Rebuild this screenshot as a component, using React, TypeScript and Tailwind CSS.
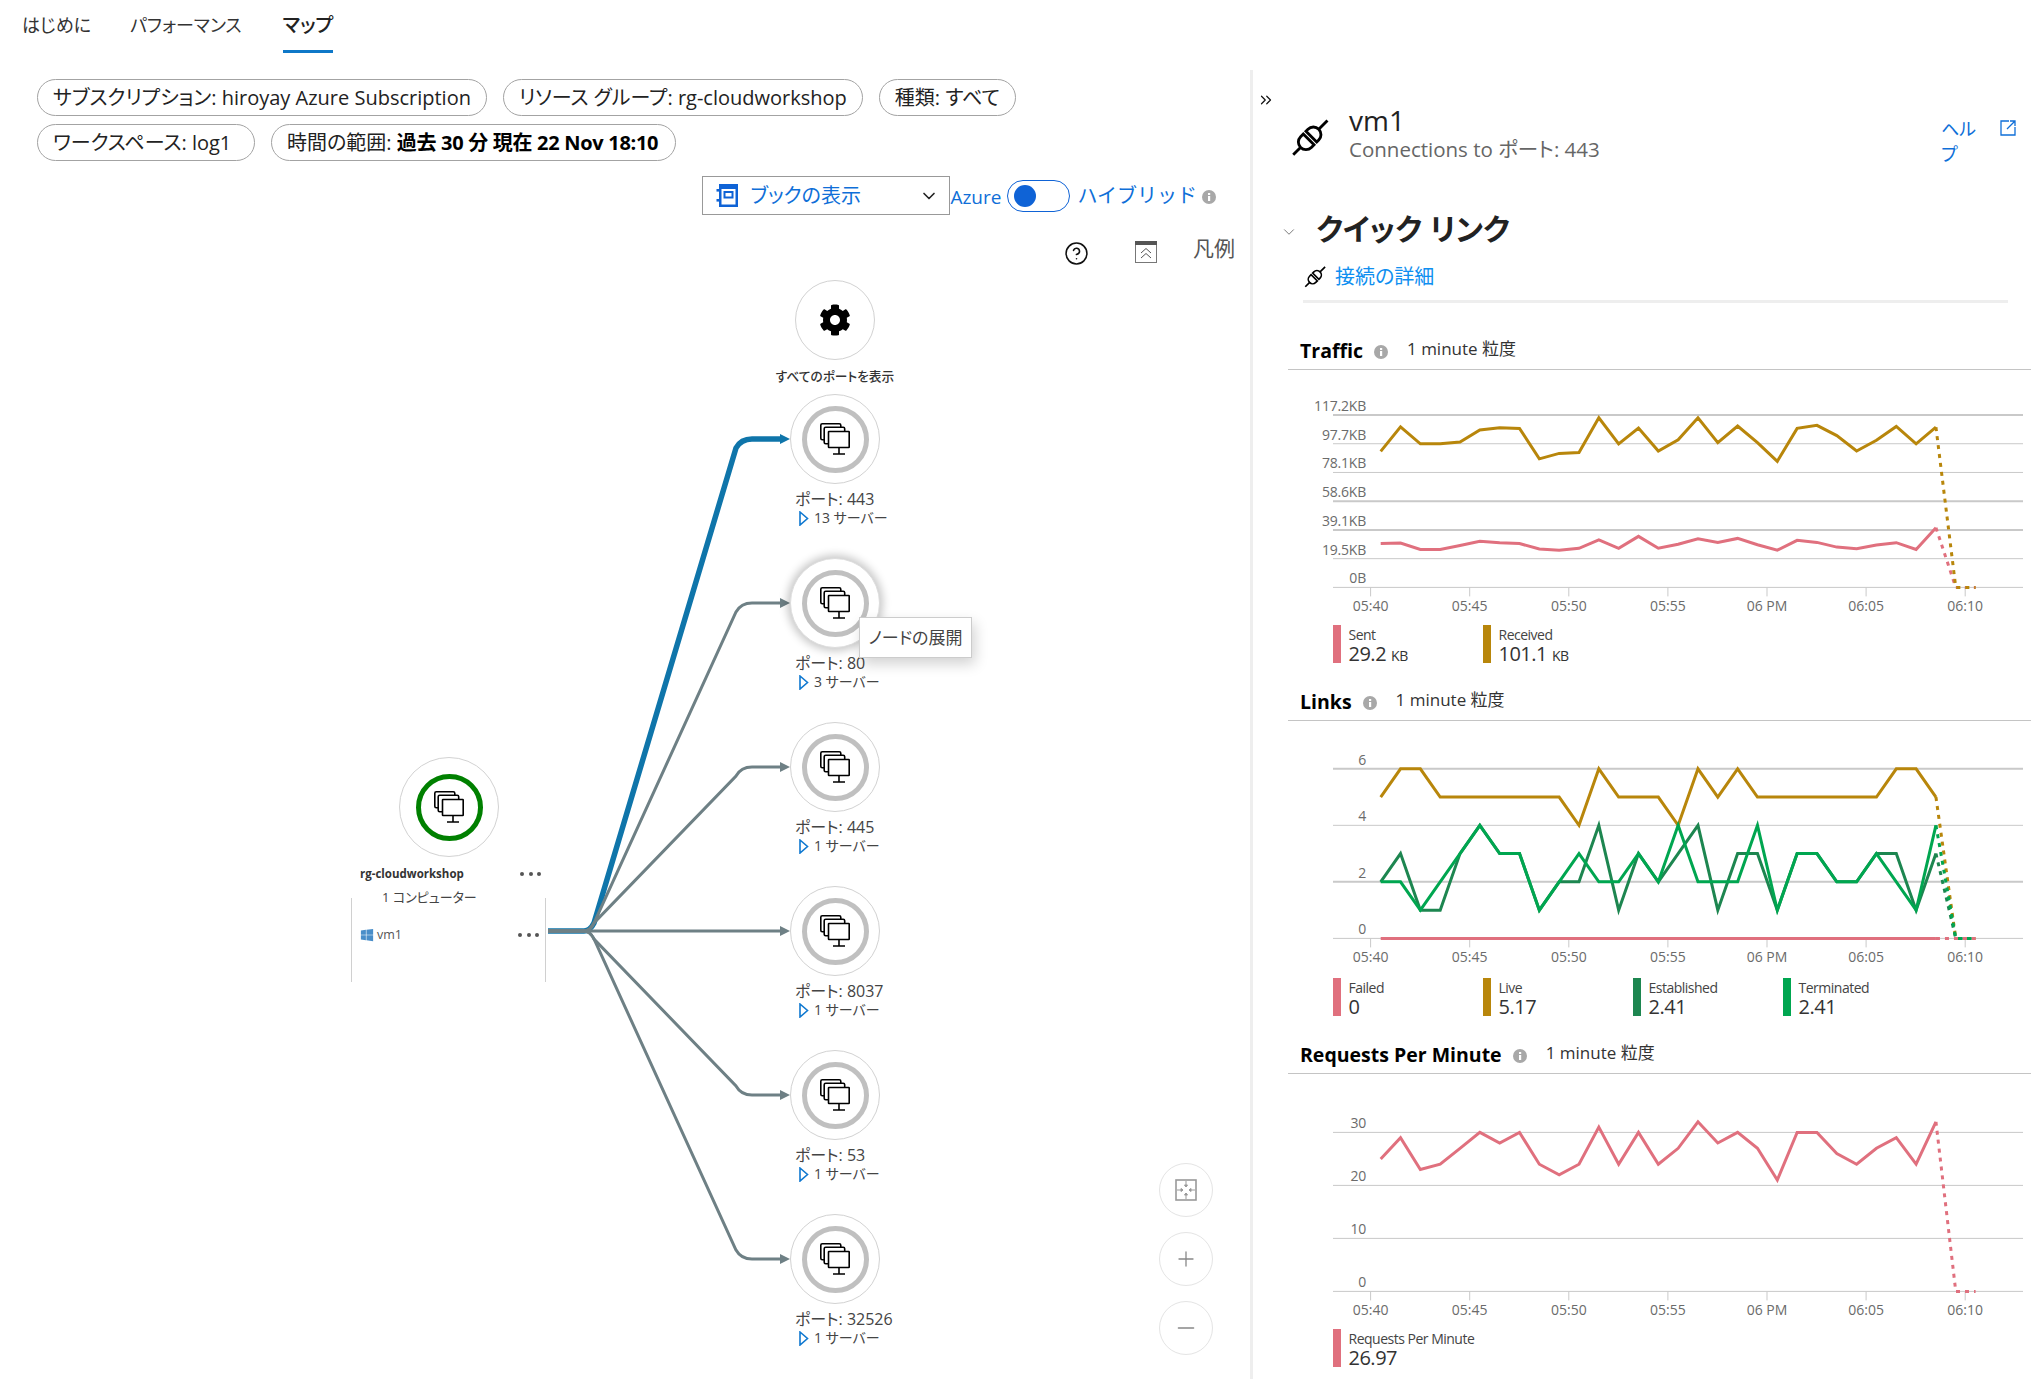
import React from 'react';
import { ChevronDown, ChevronsRight, CircleHelp, Minus, Plus } from 'lucide-react';
import { FaCog, FaWindows } from 'react-icons/fa';

const CANVAS_TOP = 264;
const HUB_Y = 931;

const ports = [
  { port: '443', servers: '13 サーバー', y: 439, color: '#0f75aa', width: 5.5 },
  { port: '80', servers: '3 サーバー', y: 603, color: '#6e8085', width: 3 },
  { port: '445', servers: '1 サーバー', y: 767, color: '#6e8085', width: 3 },
  { port: '8037', servers: '1 サーバー', y: 931, color: '#6e8085', width: 3 },
  { port: '53', servers: '1 サーバー', y: 1095, color: '#6e8085', width: 3 },
  { port: '32526', servers: '1 サーバー', y: 1259, color: '#6e8085', width: 3 },
];

const PINK = '#e0707e';
const GOLD = '#b8860b';
const DARK_GREEN = '#1d8650';
const GREEN = '#00a650';

const tickLabels = ['05:40', '05:45', '05:50', '05:55', '06 PM', '06:05', '06:10'];

const received = [92.5, 109.1, 97.6, 97.6, 98.9, 107, 108.6, 108.1, 87.4, 91.1, 91.7, 115.3, 97.6, 108.3, 92.7, 100.3, 115.3, 98.4, 109.7, 98.4, 85.7, 108.1, 110.2, 103.2, 92.7, 100, 109.4, 97.6, 108.9];
const sent = [29.8, 30.1, 25.8, 25.8, 28.5, 31.4, 30.4, 29.8, 26.1, 25.3, 26.6, 32.3, 26.6, 34.7, 26.6, 29.3, 33.1, 30.6, 33.3, 29, 25.3, 32, 30.6, 27.4, 26.3, 28.8, 30.4, 25.8, 40.6];
const live = [5, 6, 6, 5, 5, 5, 5, 5, 5, 5, 4, 6, 5, 5, 5, 4, 6, 5, 6, 5, 5, 5, 5, 5, 5, 5, 6, 6, 5];
const established = [2, 3, 1, 1, 3, 4, 3, 3, 1, 2, 2, 4, 1, 3, 2, 3, 4, 1, 3, 3, 1, 3, 3, 2, 2, 3, 3, 1, 3];
const terminated = [2, 2, 1, 2, 3, 4, 3, 3, 1, 2, 3, 2, 2, 3, 2, 4, 2, 2, 2, 4, 1, 3, 3, 2, 2, 3, 2, 1, 4];
const failed = new Array(29).fill(0);
const requests = [25, 29, 23, 24, 27, 30, 28, 30, 24, 22, 24, 31, 24, 30, 24, 27, 32, 28, 30, 27, 21, 30, 30, 26, 24, 27, 29, 24, 32];

// svg left edge sits at page x 1288
const PLOT_LEFT = 45;
const PLOT_RIGHT = 735;
const PLOT_BOTTOM = 217.4;
const FIRST_X = 92.7;
const STEP_X = 19.83;
const FIRST_TICK = 82.6;
const TICK_STEP = 99.1;

interface Series {
  color: string;
  values: number[];
}

interface ChartProps {
  top: number;
  max: number;
  labels: string[];
  thick?: number[];
  series: Series[];
  height: number;
}

const Chart: React.FC<ChartProps> = ({ top, max, labels, thick = [], series, height }) => {
  const yOf = (v: number) => PLOT_BOTTOM - (v / max) * (PLOT_BOTTOM - top);
  const gap = (PLOT_BOTTOM - top) / (labels.length - 1);
  return (
    <svg width={743} height={height} className="block">
      {labels.map((label, i) => {
        const y = top + i * gap;
        return (
          <g key={label}>
            <line x1={PLOT_LEFT} x2={PLOT_RIGHT} y1={y} y2={y} stroke="#c9c9c9" strokeWidth={thick.includes(i) ? 2 : 1} />
            <text x={78} y={y - 4} textAnchor="end" fontSize={14} letterSpacing={-0.2} fill="#6b6b6b">{label}</text>
          </g>
        );
      })}
      {tickLabels.map((label, i) => {
        const x = FIRST_TICK + i * TICK_STEP;
        return (
          <g key={label}>
            <line x1={x} x2={x} y1={PLOT_BOTTOM} y2={PLOT_BOTTOM + 9} stroke="#c9c9c9" />
            <text x={x} y={PLOT_BOTTOM + 24} textAnchor="middle" fontSize={14} fill="#6b6b6b">{label}</text>
          </g>
        );
      })}
      {series.map((s, idx) => {
        const points = s.values.map((v, i) => `${FIRST_X + i * STEP_X},${yOf(v)}`).join(' ');
        const lastX = FIRST_X + (s.values.length - 1) * STEP_X;
        const lastY = yOf(s.values[s.values.length - 1]);
        return (
          <g key={idx} fill="none" stroke={s.color} strokeWidth={3}>
            <polyline points={points} strokeLinejoin="miter" />
            <polyline
              points={`${lastX},${lastY} ${lastX + STEP_X},${PLOT_BOTTOM} ${lastX + STEP_X * 2},${PLOT_BOTTOM}`}
              strokeDasharray="4 5"
            />
          </g>
        );
      })}
    </svg>
  );
};

const InfoDot: React.FC<{ className?: string }> = ({ className }) => (
  <svg width="14" height="14" viewBox="0 0 14 14" className={className}>
    <circle cx="7" cy="7" r="7" fill="#a8a8a8" />
    <rect x="6" y="6" width="2.2" height="5" fill="#fff" />
    <rect x="6" y="3" width="2.2" height="2" fill="#fff" />
  </svg>
);

const SectionHeader: React.FC<{ title: string }> = ({ title }) => (
  <div className="flex h-[58px] items-end border-b border-[#c4c4c4] pb-[5px] pl-[12px]">
    <span className="text-[19.5px] leading-[26px] font-bold text-black">{title}</span>
    <InfoDot className="mb-[5px] ml-[11px]" />
    <span className="mb-[2px] ml-[19px] text-[17px] leading-[26px] text-[#333]">1 minute 粒度</span>
  </div>
);

const LegendItem: React.FC<{ color: string; label: string; value: string; unit?: string }> = ({ color, label, value, unit }) => (
  <div className="flex h-[38px] w-[150px] gap-[8px]">
    <div className="h-[38px] w-[7.5px]" style={{ backgroundColor: color }} />
    <div className="flex flex-col">
      <span className="text-[14px] leading-[19px] tracking-[-0.5px] text-[#444]">{label}</span>
      <span className="text-[20px] leading-[19px] tracking-[-0.5px] text-[#333]">
        {value}
        {unit && <span className="ml-[5px] text-[14px]">{unit}</span>}
      </span>
    </div>
  </div>
);

const Legend: React.FC<{ children: React.ReactNode }> = ({ children }) => (
  <div className="flex pl-[45px]">{children}</div>
);

const MonitorStack: React.FC = () => (
  <svg width="30" height="32" viewBox="0 0 30 32" fill="#fff" stroke="#000" strokeWidth="1.6">
    <rect x="0.8" y="0.8" width="20" height="16" rx="1.5" />
    <rect x="4.2" y="4.2" width="20.5" height="16.5" rx="1.5" />
    <rect x="8.5" y="8.5" width="20.7" height="16" rx="0.5" />
    <path d="M19 24.5V30.5M13 31H25" fill="none" />
  </svg>
);

const PlugIcon: React.FC<{ size: number }> = ({ size }) => (
  <svg width={size} height={size} viewBox="0 0 40 40" fill="none" stroke="#000" strokeWidth="3">
    <g transform="rotate(-45 20 20)">
      <path d="M-5 20H7M33 20H46" />
      <path d="M18 12H14A8 8 0 0 0 14 28H18Z" />
      <path d="M22 12H25A8 8 0 0 1 25 28H22Z" />
    </g>
  </svg>
);

const Dots: React.FC = () => (
  <div className="flex gap-[4.5px]">
    <span className="h-[4px] w-[4px] rounded-full bg-[#555]" />
    <span className="h-[4px] w-[4px] rounded-full bg-[#555]" />
    <span className="h-[4px] w-[4px] rounded-full bg-[#555]" />
  </div>
);

const edgePath = (y: number) => {
  if (y === HUB_Y) return `M548 ${HUB_Y}H782`;
  const dir = y < HUB_Y ? -1 : 1;
  return `M548 ${HUB_Y}H584Q590 ${HUB_Y} 594 ${HUB_Y + dir * 8}L736 ${y - dir * 9}Q741 ${y} 752 ${y}H782`;
};

const PortNode: React.FC<{ port: string; servers: string; y: number; hovered?: boolean }> = ({ port, servers, y, hovered }) => (
  <div className="absolute left-[790px] w-[200px]" style={{ top: y - 45 - CANVAS_TOP }}>
    <div
      className={`flex h-[90px] w-[90px] items-center justify-center rounded-full border bg-white ${
        hovered ? 'border-[#ddd] shadow-[0_0_8px_3px_rgba(0,0,0,0.22)]' : 'border-[#d2d2d2]'
      }`}
    >
      <div className="flex h-[67px] w-[67px] items-center justify-center rounded-full border-[5px] border-[#c0c0c0]">
        <MonitorStack />
      </div>
    </div>
    <div className="mt-[5px] ml-[5px] text-[16px] leading-[20px] text-[#444]">ポート: {port}</div>
    <div className="ml-[9px] flex items-center gap-[5px] text-[14px] leading-[18px] text-[#444]">
      <svg width="10" height="15" viewBox="0 0 10 15">
        <path d="M1 1L8.5 7.5L1 14Z" fill="none" stroke="#0f78d0" strokeWidth="1.6" />
      </svg>
      {servers}
    </div>
    {hovered && (
      <div className="absolute top-[59px] left-[69px] flex h-[41px] w-[113px] items-center justify-center border border-[#ccc] bg-white text-[17px] text-[#444] shadow-[3px_6px_14px_rgba(0,0,0,0.18)]">
        ノードの展開
      </div>
    )}
  </div>
);

const ZoomButton: React.FC<{ children: React.ReactNode }> = ({ children }) => (
  <div className="flex h-[54px] w-[54px] items-center justify-center rounded-full border border-[#e4e4e4] bg-white">
    {children}
  </div>
);

const Pill: React.FC<{ children: React.ReactNode; className?: string }> = ({ children, className = '' }) => (
  <div className={`flex h-[37px] items-center rounded-full border border-[#a3a3a3] px-[15px] text-[20px] whitespace-nowrap text-[#222] ${className}`}>
    {children}
  </div>
);

const App: React.FC = () => {
  return (
    <div className="flex h-[1379px] w-[2035px] flex-col overflow-hidden bg-white font-['Open_Sans','Noto_Sans_CJK_JP',sans-serif] [font-feature-settings:'palt']">
      {/* Tabs */}
      <div className="flex h-[70px] shrink-0 items-start pl-[22px] text-[18px] text-[#333]">
        <div className="flex h-[53px] items-center pb-[2px]">はじめに</div>
        <div className="ml-[39px] flex h-[53px] items-center pb-[2px]">パフォーマンス</div>
        <div className="ml-[41px] flex h-[53px] items-center border-b-[3px] border-[#0f78c8] text-[19.5px] font-medium text-[#222]">マップ</div>
      </div>

      <div className="flex min-h-0 flex-1">
        {/* Map pane */}
        <div className="flex w-[1250px] shrink-0 flex-col">
          <div className="mt-[9px] flex max-w-[1060px] flex-wrap gap-x-[16px] gap-y-[8px] pl-[37px]">
            <Pill>サブスクリプション: hiroyay Azure Subscription</Pill>
            <Pill>リソース グループ: rg-cloudworkshop</Pill>
            <Pill>種類: すべて</Pill>
            <Pill className="w-[218px]">ワークスペース: log1</Pill>
            <Pill className="w-[405px] px-[13px]">
              時間の範囲:&nbsp;<b className="font-bold tracking-[-0.3px] text-black">過去 30 分 現在 22 Nov 18:10</b>
            </Pill>
          </div>

          <div className="mt-[15px] flex h-[39px] items-center justify-end pr-[34px]">
            <div className="flex h-[39px] w-[248px] items-center border border-[#999] pr-[10px] pl-[13px] text-[20px] text-[#0f6fd8]">
              <svg width="22" height="23" viewBox="0 0 22 23" fill="none">
                <path d="M3 0H22V23H3Z" fill="#0f63d6" />
                <rect x="5.5" y="5" width="14" height="15.5" fill="#fff" />
                <rect x="8.5" y="8" width="8" height="5.5" stroke="#0f63d6" strokeWidth="2" />
                <rect x="0.5" y="5" width="4" height="2.6" fill="#0f63d6" />
                <rect x="0.5" y="15" width="4" height="2.6" fill="#0f63d6" />
              </svg>
              <span className="ml-[12px] flex-1">ブックの表示</span>
              <ChevronDown size={20} color="#222" />
            </div>
            <span className="mt-[4px] w-[57px] text-[19px] text-[#0f6fd8]">Azure</span>
            <div className="flex h-[32px] w-[63px] items-center rounded-full border border-[#0f63d6] pl-[6px]">
              <div className="h-[22px] w-[22px] rounded-full bg-[#0f63d6]" />
            </div>
            <span className="ml-[7px] text-[20px] text-[#0f6fd8] [font-feature-settings:normal]">ハイブリッド</span>
            <InfoDot className="mt-[2px] ml-[5px]" />
          </div>

          <div className="mt-[25px] flex h-[24px] items-start justify-end pr-[15px]">
            <CircleHelp size={25} strokeWidth={1.5} color="#111" className="mt-[1px]" />
            <svg width="22" height="22" viewBox="0 0 22 22" fill="none" className="mt-[1px] ml-[46px]">
              <rect x="0.5" y="0.5" width="21" height="21" stroke="#777" />
              <rect x="0" y="0" width="22" height="4" fill="#555" />
              <path d="M6 12L11 7.5L16 12M6 17L11 12.5L16 17" stroke="#555" />
            </svg>
            <span className="-mt-[7px] ml-[36px] text-[21px] text-[#555]">凡例</span>
          </div>

          {/* Map canvas */}
          <div className="relative min-h-0 flex-1">
            <svg
              width="1250"
              height={1379 - CANVAS_TOP}
              viewBox={`0 ${CANVAS_TOP} 1250 ${1379 - CANVAS_TOP}`}
              fill="none"
              className="absolute top-0 left-0"
            >
              {ports.map((p) => (
                <g key={p.port}>
                  <path d={edgePath(p.y)} stroke={p.color} strokeWidth={p.width} />
                  <path d={`M780 ${p.y - 5}L790 ${p.y}L780 ${p.y + 5}Z`} fill={p.color} />
                </g>
              ))}
            </svg>

            {/* "all ports" node */}
            <div className="absolute top-[16px] left-[735px] flex w-[200px] flex-col items-center">
              <div className="flex h-[80px] w-[80px] items-center justify-center rounded-full border border-[#d2d2d2]">
                <FaCog size={32} color="#000" />
              </div>
              <span className="mt-[6px] text-[12.7px] leading-[20px] font-medium text-[#333]">すべてのポートを表示</span>
            </div>

            {ports.map((p) => (
              <PortNode key={p.port} port={p.port} servers={p.servers} y={p.y} hovered={p.port === '80'} />
            ))}

            {/* resource group node */}
            <div className="absolute top-[493px] left-[351px] flex w-[195px] flex-col">
              <div className="ml-[48px] flex h-[100px] w-[100px] items-center justify-center rounded-full border border-[#d2d2d2] bg-white">
                <div className="flex h-[67px] w-[67px] items-center justify-center rounded-full border-[5px] border-[#008000]">
                  <MonitorStack />
                </div>
              </div>
              <div className="mt-[7px] flex h-[20px] items-center justify-between pr-[5px] pl-[9px]">
                <span className="text-[11.5px] font-bold text-[#333]">rg-cloudworkshop</span>
                <Dots />
              </div>
              <div className="mt-[3px] pl-[31px] text-[13px] leading-[20px] text-[#444]">1 コンピューター</div>
              <div className="-mt-[9px] h-[84px] border-x border-[#d0d0d0] pt-[27px] pr-[6px] pl-[8px]">
                <div className="flex h-[20px] items-center justify-between">
                  <div className="flex items-center gap-[3px]">
                    <FaWindows size={14} color="#4a8ec9" />
                    <span className="text-[12.5px] text-[#555]">vm1</span>
                  </div>
                  <Dots />
                </div>
              </div>
            </div>

            {/* zoom controls */}
            <div className="absolute top-[899px] left-[1159px] flex flex-col gap-[15px]">
              <ZoomButton>
                <svg width="22" height="22" viewBox="0 0 22 22" fill="none" stroke="#999">
                  <rect x="1" y="1" width="20" height="20" strokeWidth="1.6" />
                  <path d="M11 2V8M11 14V20M2 11H8M14 11H20" strokeWidth="1" />
                  <path d="M9.5 6L11 8L12.5 6ZM9.5 16L11 14L12.5 16ZM6 9.5L8 11L6 12.5ZM16 9.5L14 11L16 12.5Z" fill="#999" />
                </svg>
              </ZoomButton>
              <ZoomButton>
                <Plus size={24} strokeWidth={1.3} color="#888" />
              </ZoomButton>
              <ZoomButton>
                <Minus size={26} strokeWidth={1.3} color="#888" />
              </ZoomButton>
            </div>
          </div>
        </div>

        {/* Detail pane */}
        <div className="min-w-0 flex-1 border-l-[3px] border-[#eeeeee] pl-[35px]">
          <div className="-ml-[31px] flex items-start pt-[20px]">
            <ChevronsRight size={18} strokeWidth={1.6} color="#111" className="mt-[1px]" />
            <div className="mt-[29px] ml-[16px]">
              <PlugIcon size={38} />
            </div>
            <div className="mt-[13px] ml-[20px] flex-1">
              <div className="text-[28px] leading-[34px] text-[#222]">vm1</div>
              <div className="text-[20.5px] leading-[25px] text-[#666]">Connections to ポート: 443</div>
            </div>
            <div className="mt-[27px] w-[38px] text-[18px] leading-[25px] text-[#0f6fd8]">ヘルプ</div>
            <svg width="16" height="16" viewBox="0 0 16 16" fill="none" stroke="#0f6fd8" strokeWidth="1.3" className="mt-[30px] mr-[19px] ml-[21px]">
              <path d="M9 1H1V15H15V7M15 1L7 9M10 1H15V6" />
            </svg>
          </div>

          <div className="mt-[43px] -ml-[8px] flex h-[36px] items-center">
            <ChevronDown size={18} strokeWidth={1.3} color="#777" className="mt-[8px]" />
            <span className="ml-[18px] text-[30px] font-bold text-[#222]">クイック リンク</span>
          </div>
          <div className="mt-[17px] ml-[16px] flex h-[28px] items-center gap-[9px]">
            <PlugIcon size={22} />
            <span className="text-[20px] text-[#0f8ff0]">接続の詳細</span>
          </div>
          <div className="mt-[9px] ml-[15px] h-[3px] w-[705px] bg-[#eeeeee]" />

          <div className="mt-[9px] w-[743px]">
            <SectionHeader title="Traffic" />
            <Chart
              top={45}
              max={117.2}
              height={255}
              thick={[0, 3, 4]}
              labels={['117.2KB', '97.7KB', '78.1KB', '58.6KB', '39.1KB', '19.5KB', '0B']}
              series={[
                { color: PINK, values: sent },
                { color: GOLD, values: received },
              ]}
            />
            <Legend>
              <LegendItem color={PINK} label="Sent" value="29.2" unit="KB" />
              <LegendItem color={GOLD} label="Received" value="101.1" unit="KB" />
            </Legend>
          </div>

          <div className="w-[743px]">
            <SectionHeader title="Links" />
            <Chart
              top={47.8}
              max={6}
              height={257}
              thick={[0, 2]}
              labels={['6', '4', '2', '0']}
              series={[
                { color: GOLD, values: live },
                { color: DARK_GREEN, values: established },
                { color: GREEN, values: terminated },
                { color: PINK, values: failed },
              ]}
            />
            <Legend>
              <LegendItem color={PINK} label="Failed" value="0" />
              <LegendItem color={GOLD} label="Live" value="5.17" />
              <LegendItem color={DARK_GREEN} label="Established" value="2.41" />
              <LegendItem color={GREEN} label="Terminated" value="2.41" />
            </Legend>
          </div>

          <div className="w-[743px]">
            <SectionHeader title="Requests Per Minute" />
            <Chart
              top={58.4}
              max={30}
              height={255}
              labels={['30', '20', '10', '0']}
              series={[{ color: PINK, values: requests }]}
            />
            <Legend>
              <LegendItem color={PINK} label="Requests Per Minute" value="26.97" />
            </Legend>
          </div>
        </div>
      </div>
    </div>
  );
};

export default App;
